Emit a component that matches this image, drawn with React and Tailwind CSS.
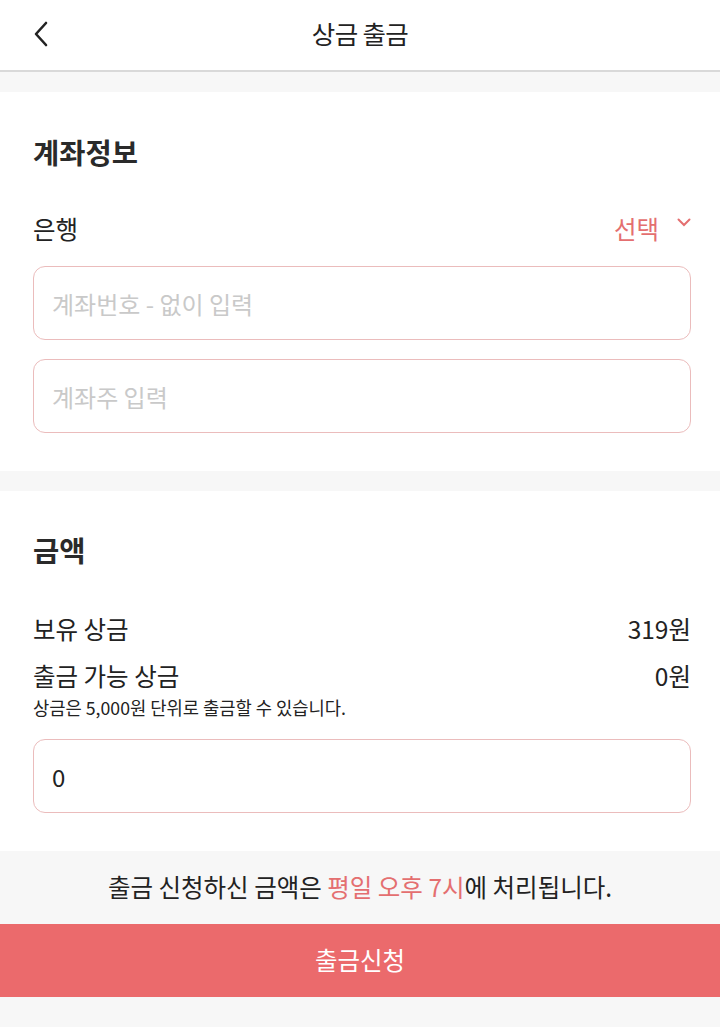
import { useState } from "react";

const font = { fontFamily: '"Noto Sans CJK KR", "Noto Sans", sans-serif' };

const Field = ({ placeholder, value, onChange }) => (
  <input
    className="w-full h-[74px] rounded-[12px] border border-[#ebbcbc] bg-white px-[18px] text-[24px] text-[#222] placeholder:text-[#c9c9c9] outline-none"
    placeholder={placeholder}
    value={value}
    onChange={(e) => onChange(e.target.value)}
  />
);

export default function App() {
  const [account, setAccount] = useState("");
  const [owner, setOwner] = useState("");
  const [amount, setAmount] = useState("0");

  return (
    <div className="w-[720px] min-h-[1027px] bg-[#f7f7f7] text-[#222]" style={font}>
      <header className="h-[72px] bg-white border-b-2 border-[#d9d9d9] flex items-center relative pb-[4px]">
        <button className="absolute left-[28px] top-[16px] p-1">
          <svg width="18" height="28" viewBox="0 0 18 28" fill="none" stroke="#222" strokeWidth="2.6" strokeLinecap="round" strokeLinejoin="round">
            <path d="M14 3 L4 14 L14 25" />
          </svg>
        </button>
        <h1 className="flex-1 text-center text-[25.5px] leading-[36px] tracking-tight">상금 출금</h1>
      </header>

      <section className="mt-[20px] bg-white pl-[33px] pr-[29px] pt-[40px] pb-[38px]">
        <h2 className="text-[28.5px] leading-[40px] font-bold text-[#2a2a2a]">계좌정보</h2>
        <div className="mt-[41px] flex items-center justify-between leading-[32px]">
          <span className="text-[24.5px]">은행</span>
          <button className="flex items-start gap-[18px] text-[24.5px] leading-[32px] text-[#e46f70]">
            선택
            <svg width="14" height="9" viewBox="0 0 14 9" fill="none" stroke="#e46f70" strokeWidth="2" strokeLinecap="round" className="mt-[5px]">
              <path d="M1.5 1.5 L7 7 L12.5 1.5" />
            </svg>
          </button>
        </div>
        <div className="mt-[21px] flex flex-col gap-[19px]">
          <Field placeholder="계좌번호 - 없이 입력" value={account} onChange={setAccount} />
          <Field placeholder="계좌주 입력" value={owner} onChange={setOwner} />
        </div>
      </section>

      <section className="mt-[20px] bg-white pl-[33px] pr-[29px] pt-[39px] pb-[38px]">
        <h2 className="text-[28.5px] leading-[40px] font-bold text-[#2a2a2a]">금액</h2>
        <div className="mt-[43px] flex items-center justify-between text-[24.5px] leading-[32px]">
          <span>보유 상금</span>
          <span>319원</span>
        </div>
        <div className="mt-[15px] flex items-center justify-between text-[24.5px] leading-[32px]">
          <span>출금 가능 상금</span>
          <span>0원</span>
        </div>
        <p className="mt-[3px] text-[17.7px] leading-[24px]">상금은 5,000원 단위로 출금할 수 있습니다.</p>
        <div className="mt-[20px]">
          <Field value={amount} onChange={setAmount} />
        </div>
      </section>

      <p className="h-[73px] flex items-center justify-center text-[24.5px]">
        출금 신청하신 금액은&nbsp;<span className="text-[#e46f70]">평일 오후 7시</span>에 처리됩니다.
      </p>
      <button className="w-full h-[73px] bg-[#eb6a6c] text-white text-[24.5px]">출금신청</button>
    </div>
  );
}
